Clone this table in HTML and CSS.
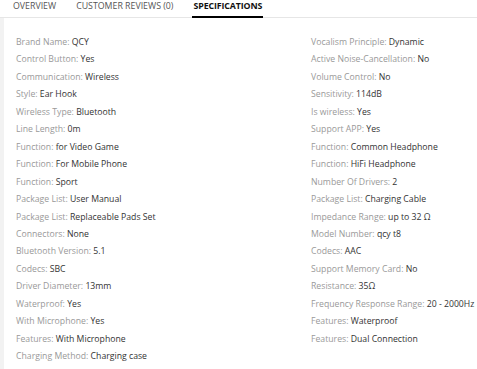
FILE: index.html
```html
<!DOCTYPE html>
<html>
<head>
<meta charset="utf-8">
<link rel="stylesheet" href="styles.css">
</head>
<body>
<div class="tabs">
  <div class="tab">OVERVIEW</div>
  <div class="tab">CUSTOMER REVIEWS (0)</div>
  <div class="tab active">SPECIFICATIONS</div>
</div>
<div class="panel">
  <ul class="col">
    <li><span class="k">Brand Name:</span> QCY</li>
    <li><span class="k">Control Button:</span> Yes</li>
    <li><span class="k">Communication:</span> Wireless</li>
    <li><span class="k">Style:</span> Ear Hook</li>
    <li><span class="k">Wireless Type:</span> Bluetooth</li>
    <li><span class="k">Line Length:</span> 0m</li>
    <li><span class="k">Function:</span> for Video Game</li>
    <li><span class="k">Function:</span> For Mobile Phone</li>
    <li><span class="k">Function:</span> Sport</li>
    <li><span class="k">Package List:</span> User Manual</li>
    <li><span class="k">Package List:</span> Replaceable Pads Set</li>
    <li><span class="k">Connectors:</span> None</li>
    <li><span class="k">Bluetooth Version:</span> 5.1</li>
    <li><span class="k">Codecs:</span> SBC</li>
    <li><span class="k">Driver Diameter:</span> 13mm</li>
    <li><span class="k">Waterproof:</span> Yes</li>
    <li><span class="k">With Microphone:</span> Yes</li>
    <li><span class="k">Features:</span> With Microphone</li>
    <li><span class="k">Charging Method:</span> Charging case</li>
  </ul>
  <ul class="col">
    <li><span class="k">Vocalism Principle:</span> Dynamic</li>
    <li><span class="k">Active Noise-Cancellation:</span> No</li>
    <li><span class="k">Volume Control:</span> No</li>
    <li><span class="k">Sensitivity:</span> 114dB</li>
    <li><span class="k">Is wireless:</span> Yes</li>
    <li><span class="k">Support APP:</span> Yes</li>
    <li><span class="k">Function:</span> Common Headphone</li>
    <li><span class="k">Function:</span> HiFi Headphone</li>
    <li><span class="k">Number Of Drivers:</span> 2</li>
    <li><span class="k">Package List:</span> Charging Cable</li>
    <li><span class="k">Impedance Range:</span> up to 32 Ω</li>
    <li><span class="k">Model Number:</span> qcy t8</li>
    <li><span class="k">Codecs:</span> AAC</li>
    <li><span class="k">Support Memory Card:</span> No</li>
    <li><span class="k">Resistance:</span> 35Ω</li>
    <li><span class="k">Frequency Response Range:</span> 20 - 2000Hz</li>
    <li><span class="k">Features:</span> Waterproof</li>
    <li><span class="k">Features:</span> Dual Connection</li>
  </ul>
</div>
</body>
</html>
```
FILE: styles.css
```css
html, body {
  margin: 0;
  padding: 0;
  background: #fff;
  font-family: "Open Sans", "Liberation Sans", sans-serif;
  overflow: hidden;
}
.tabs {
  display: flex;
  gap: 20px;
  padding-left: 13px;
  height: 19px;
  border-bottom: 1px solid #e6e6e6;
  margin-top: -2px;
}
.tab {
  font-size: 8.8px;
  color: #555;
  line-height: 17px;
  position: relative;
}
.tab.active {
  color: #111;
  font-weight: 700;
  letter-spacing: -0.1px;
}
.tab.active::after {
  content: "";
  position: absolute;
  left: -1px;
  right: -1px;
  bottom: -1px;
  height: 2px;
  background: #000;
}
.panel {
  display: grid;
  grid-template-columns: 295px 1fr;
  border-left: 4px solid #f2f2f2;
  padding: 16px 0 20px 12px;
}
.col {
  list-style: none;
  margin: 0;
  padding: 0;
}
.col li {
  font-size: 8.7px;
  line-height: 17.45px;
  color: #333;
  white-space: nowrap;
}
.k {
  color: #999;
}
```
